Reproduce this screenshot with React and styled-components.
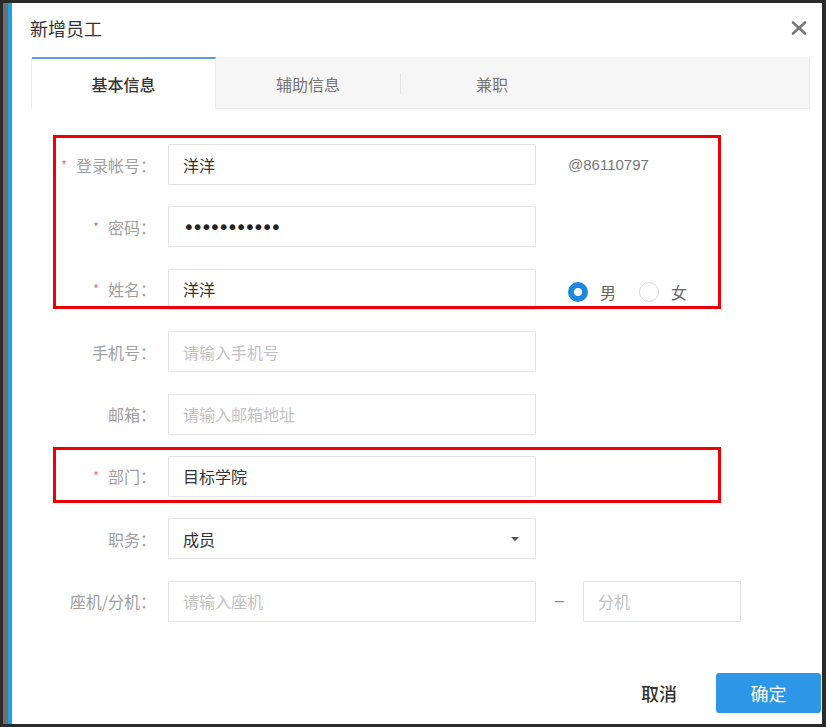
import React from 'react';
import styled, { createGlobalStyle, css } from 'styled-components';

const GlobalStyle = createGlobalStyle`
  html, body {
    margin: 0;
    padding: 0;
    background: #2a2a2a;
  }
  * {
    box-sizing: border-box;
  }
`;

const FONT = `"Noto Sans CJK SC", "Noto Sans", sans-serif`;

const Screen = styled.div`
  width: 826px;
  height: 727px;
  padding: 3px 4px 3px 3px;
  display: flex;
  background: #2a2a2a;
  font-family: ${FONT};
`;

const Strip = styled.div`
  width: 5px;
  background: #6f6f6f;
`;

const Dialog = styled.div`
  flex: 1;
  display: flex;
  flex-direction: column;
  background: #fff;
  border-left: 4px solid #1ea0e6;
`;

const Header = styled.div`
  height: 54px;
  padding: 0 15px 4px 18px;
  display: flex;
  align-items: center;
  justify-content: space-between;
`;

const Title = styled.div`
  font-size: 18px;
  color: #333;
  line-height: 1;
`;

const Close = styled.button`
  width: 16px;
  height: 16px;
  padding: 0;
  border: 0;
  background: none;
  display: flex;
  cursor: pointer;
`;

const TabBar = styled.div`
  height: 52px;
  margin: 0 12px 0 19px;
  display: flex;
  background: #f6f6f6;
  border: 1px solid #ececec;
  border-top: 0;
`;

const Tab = styled.div`
  width: 184px;
  position: relative;
  display: flex;
  align-items: center;
  justify-content: center;
  padding-top: 2px;
  font-size: 16px;
  color: #777;
  ${(p) =>
    p.$active &&
    css`
      padding-top: 0;
      background: #fff;
      color: #333;
      font-weight: 500;
      border-top: 2px solid #5b9fdc;
      border-right: 1px solid #ececec;
      margin-bottom: -1px;
    `}
  ${(p) =>
    p.$divider &&
    css`
      &::before {
        content: '';
        position: absolute;
        left: 0;
        top: 16px;
        bottom: 14px;
        width: 1px;
        background: #e4e4e4;
      }
    `}
`;

const Form = styled.div`
  padding: 35px 12px 0 19px;
  display: flex;
  flex-direction: column;
  gap: 21.4px;
`;

const Group = styled.div`
  position: relative;
  display: flex;
  flex-direction: column;
  gap: 21.4px;
  &::after {
    content: '';
    position: absolute;
    left: 22px;
    width: 662px;
    top: ${(p) => p.$top}px;
    bottom: ${(p) => p.$bottom}px;
    border: 3px solid #ec0000;
    pointer-events: none;
    z-index: 2;
  }
`;

const Row = styled.div`
  display: flex;
  align-items: center;
  height: 41px;
`;

const Label = styled.label`
  width: 125px;
  margin-right: 12px;
  flex-shrink: 0;
  text-align: right;
  font-size: 16px;
  color: #a0a0a0;
  white-space: nowrap;
`;

const Star = styled.span`
  color: #e36a74;
  font-size: 12px;
  margin-right: 9px;
  position: relative;
  top: -2px;
`;

const Input = styled.input`
  width: ${(p) => p.$width || 368}px;
  height: 41px;
  padding: 0 14px;
  border: 1px solid #e4e4e4;
  border-radius: 1px;
  outline: none;
  font-family: ${FONT};
  font-size: 16px;
  color: #333;
  background: #fff;
  &::placeholder {
    color: #c2c2c2;
  }
`;

const Password = styled(Input)`
  font-family: "DejaVu Sans", sans-serif;
  font-size: 20px;
  letter-spacing: -3.1px;
  color: #222;
`;

const Select = styled.div`
  width: 368px;
  height: 41px;
  padding: 0 14px;
  border: 1px solid #e4e4e4;
  border-radius: 1px;
  display: flex;
  align-items: center;
  justify-content: space-between;
  font-size: 16px;
  color: #333;
`;

const Caret = styled.span`
  width: 0;
  height: 0;
  border-left: 4px solid transparent;
  border-right: 4px solid transparent;
  border-top: 4px solid #555;
  margin-right: 2px;
`;

const Account = styled.span`
  padding-left: 32px;
  font-family: "Liberation Sans", ${FONT};
  font-size: 15px;
  color: #777;
`;

const RadioGroup = styled.div`
  padding: 5px 0 0 32px;
  display: flex;
  align-items: center;
  gap: 23px;
`;

const RadioOption = styled.label`
  display: flex;
  align-items: center;
  gap: 12px;
  font-size: 16px;
  color: #666;
`;

const Circle = styled.span`
  width: 20px;
  height: 20px;
  border-radius: 50%;
  ${(p) =>
    p.$checked
      ? css`
          background: #fff;
          border: 6px solid #1e88e0;
        `
      : css`
          border: 1px solid #d9d9d9;
        `}
`;

const Dash = styled.span`
  width: 47px;
  text-align: center;
  color: #8a8a8a;
  font-family: "Liberation Sans", sans-serif;
  font-size: 16px;
`;

const Footer = styled.div`
  margin-top: auto;
  padding: 0 1px 11px 0;
  display: flex;
  justify-content: flex-end;
  gap: 19px;
`;

const Button = styled.button`
  height: 40px;
  border: 0;
  border-radius: 3px;
  font-family: ${FONT};
  font-size: 18px;
  cursor: pointer;
  ${(p) =>
    p.$primary
      ? css`
          width: 105px;
          background: #2e96e6;
          color: #fff;
        `
      : css`
          padding: 0 20px;
          background: none;
          color: #333;
          font-weight: 500;
        `}
`;

function Field({ label, required, children }) {
  return (
    <Row>
      <Label>
        {required && <Star>*</Star>}
        {label}：
      </Label>
      {children}
    </Row>
  );
}

export default function App() {
  return (
    <>
      <GlobalStyle />
      <Screen>
        <Strip />
        <Dialog>
          <Header>
            <Title>新增员工</Title>
            <Close aria-label="关闭">
              <svg width="16" height="16" viewBox="0 0 16 16">
                <path d="M2 2.5 L14 13.5 M14 2.5 L2 13.5" stroke="#777" strokeWidth="2.6" strokeLinecap="round" />
              </svg>
            </Close>
          </Header>

          <TabBar>
            <Tab $active>基本信息</Tab>
            <Tab>辅助信息</Tab>
            <Tab $divider>兼职</Tab>
          </TabBar>

          <Form>
            <Group $top={-9} $bottom={1}>
              <Field label="登录帐号" required>
                <Input defaultValue="洋洋" readOnly />
                <Account>@86110797</Account>
              </Field>
              <Field label="密码" required>
                <Password type="password" defaultValue="12345678901" readOnly />
              </Field>
              <Field label="姓名" required>
                <Input defaultValue="洋洋" readOnly />
                <RadioGroup>
                  <RadioOption>
                    <Circle $checked />男
                  </RadioOption>
                  <RadioOption>
                    <Circle />女
                  </RadioOption>
                </RadioGroup>
              </Field>
            </Group>

            <Field label="手机号">
              <Input placeholder="请输入手机号" />
            </Field>
            <Field label="邮箱">
              <Input placeholder="请输入邮箱地址" />
            </Field>

            <Group $top={-9} $bottom={-6}>
              <Field label="部门" required>
                <Input defaultValue="目标学院" readOnly />
              </Field>
            </Group>

            <Field label="职务">
              <Select>
                成员
                <Caret />
              </Select>
            </Field>
            <Field label="座机/分机">
              <Input placeholder="请输入座机" />
              <Dash>–</Dash>
              <Input placeholder="分机" $width={158} />
            </Field>
          </Form>

          <Footer>
            <Button>取消</Button>
            <Button $primary>确定</Button>
          </Footer>
        </Dialog>
      </Screen>
    </>
  );
}
